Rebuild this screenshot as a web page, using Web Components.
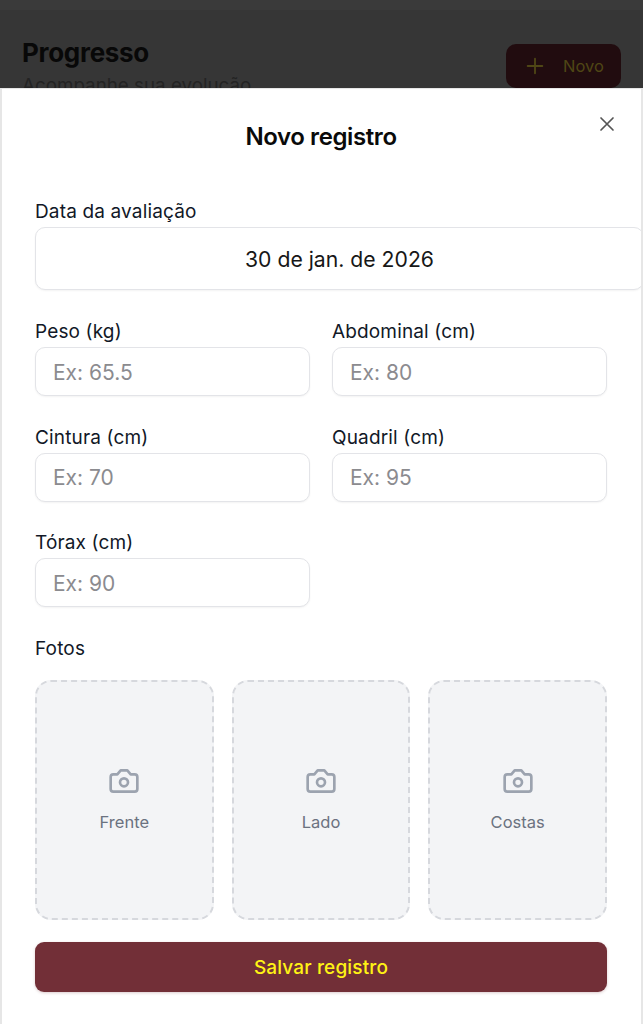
<!DOCTYPE html>
<html lang="pt-BR">
<head>
<meta charset="utf-8">
<title>Progresso</title>
<style>
    html, body { margin: 0; height: 100%; }
    body { font-family: Inter, "Liberation Sans", sans-serif; overflow: hidden; }
</style>
</head>
<body>
<progress-page></progress-page>
<script>
class ProgressPage extends HTMLElement {
    constructor() {
        super();
        this.attachShadow({ mode: 'open' });
    }

    connectedCallback() {
        this.shadowRoot.innerHTML = `
            <style>
                :host {
                    display: block;
                    position: relative;
                    width: 643px;
                    height: 1024px;
                    overflow: hidden;
                    background: #363636;
                }
                .topbar {
                    height: 10px;
                    background: #3a3a3a;
                }
                header {
                    display: flex;
                    justify-content: space-between;
                    align-items: flex-start;
                    padding: 29px 22px 0 22px;
                }
                h1 {
                    margin: 0;
                    font-size: 26px;
                    line-height: 28px;
                    font-weight: 700;
                    letter-spacing: -0.3px;
                    color: #080808;
                }
                p {
                    margin: 8px 0 0;
                    font-size: 18.8px;
                    line-height: 22px;
                    color: #232323;
                }
                .new {
                    display: flex;
                    align-items: center;
                    gap: 17px;
                    width: 115px;
                    height: 44px;
                    box-sizing: border-box;
                    margin-top: 5px;
                    padding-left: 18px;
                    border-radius: 10px;
                    background: #210c0f;
                    color: #4f4615;
                    font-size: 16.5px;
                }
                .new svg { width: 22px; height: 22px; flex: none; }
            </style>
            <div class="topbar"></div>
            <header>
                <div>
                    <h1>Progresso</h1>
                    <p>Acompanhe sua evolução</p>
                </div>
                <div class="new">
                    <svg viewBox="0 0 24 24" fill="none" stroke="currentColor" stroke-width="2" stroke-linecap="round"><path d="M12 4v16M4 12h16"/></svg>
                    <span>Novo</span>
                </div>
            </header>
            <new-record-sheet></new-record-sheet>
        `;
    }
}

class NewRecordSheet extends HTMLElement {
    constructor() {
        super();
        this.attachShadow({ mode: 'open' });
    }

    connectedCallback() {
        this.shadowRoot.innerHTML = `
            <style>
                :host {
                    display: block;
                    position: absolute;
                    left: 0;
                    right: 0;
                    top: 88px;
                    bottom: 0;
                    overflow: hidden;
                    box-sizing: border-box;
                    background: #fff;
                    border: 1px solid #e6e6e6;
                    border-width: 1px 2px 0 2px;
                    padding-left: 33px;
                    padding-right: 34px;
                }
                h2 {
                    margin: 0;
                    padding-top: 33px;
                    height: 29px;
                    line-height: 29px;
                    text-align: center;
                    font-size: 24px;
                    font-weight: 600;
                    letter-spacing: -0.4px;
                    color: #0a0a0a;
                }
                .close {
                    position: absolute;
                    top: 25px;
                    right: 24px;
                    width: 20px;
                    height: 20px;
                    color: #555;
                }
                form { display: block; margin-top: 50px; }
                .date { width: 609px; margin-bottom: 31px; }
                .grid {
                    display: grid;
                    grid-template-columns: 275px 275px;
                    column-gap: 22px;
                    row-gap: 30.5px;
                }
                .label {
                    font-size: 19px;
                    line-height: 22px;
                    letter-spacing: 0.15px;
                    color: #111827;
                    margin: 31px 0 20px;
                }
                .photos {
                    display: grid;
                    grid-template-columns: repeat(3, 1fr);
                    column-gap: 18px;
                }
                button {
                    display: block;
                    width: 100%;
                    height: 50px;
                    margin-top: 22px;
                    border: 0;
                    border-radius: 9px;
                    background: #722f37;
                    color: #fff314;
                    font: 450 19px Inter, "Liberation Sans", sans-serif;
                    letter-spacing: 0.15px;
                    box-shadow: 0 1px 3px rgba(114, 47, 55, .25);
                }
            </style>
            <h2>Novo registro</h2>
            <svg class="close" viewBox="0 0 20 20" fill="none" stroke="currentColor" stroke-width="1.7" stroke-linecap="round"><path d="M4 4l12 12M16 4L4 16"/></svg>
            <form>
                <form-field class="date" label="Data da avaliação" centered>30 de jan. de 2026</form-field>
                <div class="grid">
                    <form-field label="Peso (kg)">Ex: 65.5</form-field>
                    <form-field label="Abdominal (cm)">Ex: 80</form-field>
                    <form-field label="Cintura (cm)">Ex: 70</form-field>
                    <form-field label="Quadril (cm)">Ex: 95</form-field>
                    <form-field label="Tórax (cm)">Ex: 90</form-field>
                </div>
                <div class="label">Fotos</div>
                <div class="photos">
                    <photo-slot>Frente</photo-slot>
                    <photo-slot>Lado</photo-slot>
                    <photo-slot>Costas</photo-slot>
                </div>
                <button type="button">Salvar registro</button>
            </form>
        `;
    }
}

class FormField extends HTMLElement {
    constructor() {
        super();
        this.attachShadow({ mode: 'open' });
    }

    connectedCallback() {
        const centered = this.hasAttribute('centered');
        this.shadowRoot.innerHTML = `
            <style>
                :host { display: block; }
                label {
                    display: block;
                    font-size: 19px;
                    line-height: 22px;
                    letter-spacing: 0.15px;
                    color: #111827;
                    margin-bottom: 4px;
                }
                .box {
                    box-sizing: border-box;
                    display: flex;
                    align-items: center;
                    height: ${centered ? 63 : 49}px;
                    padding: ${centered ? 0 : 1}px 17px 0;
                    border: 1.5px solid #e3e4e8;
                    border-radius: 10px;
                    background: #fff;
                    font-size: ${centered ? 21.2 : 21}px;
                    color: ${centered ? '#171717' : '#8b8b8f'};
                    ${centered ? 'justify-content: center;' : ''}
                    box-shadow: 0 1px 2px rgba(0, 0, 0, .05);
                }
            </style>
            <label>${this.getAttribute('label')}</label>
            <div class="box"><slot></slot></div>
        `;
    }
}

class PhotoSlot extends HTMLElement {
    constructor() {
        super();
        this.attachShadow({ mode: 'open' });
    }

    connectedCallback() {
        this.shadowRoot.innerHTML = `
            <style>
                :host {
                    display: flex;
                    flex-direction: column;
                    align-items: center;
                    justify-content: center;
                    gap: 15px;
                    box-sizing: border-box;
                    height: 240px;
                    padding-bottom: 3px;
                    border: 2px dashed #d6d8dd;
                    border-radius: 16px;
                    background: #f3f4f6;
                    color: #6b7280;
                    font-size: 16.5px;
                    line-height: 20px;
                }
                svg { width: 32px; height: 32px; color: #9ca3af; }
            </style>
            <svg viewBox="0 0 24 24" fill="none" stroke="currentColor" stroke-width="2" stroke-linecap="round" stroke-linejoin="round">
                <path d="M14.5 4h-5L7 7H4a2 2 0 0 0-2 2v9a2 2 0 0 0 2 2h16a2 2 0 0 0 2-2V9a2 2 0 0 0-2-2h-3l-2.5-3z"/>
                <circle cx="12" cy="13" r="3"/>
            </svg>
            <slot></slot>
        `;
    }
}

customElements.define('progress-page', ProgressPage);
customElements.define('new-record-sheet', NewRecordSheet);
customElements.define('form-field', FormField);
customElements.define('photo-slot', PhotoSlot);
</script>
</body>
</html>
